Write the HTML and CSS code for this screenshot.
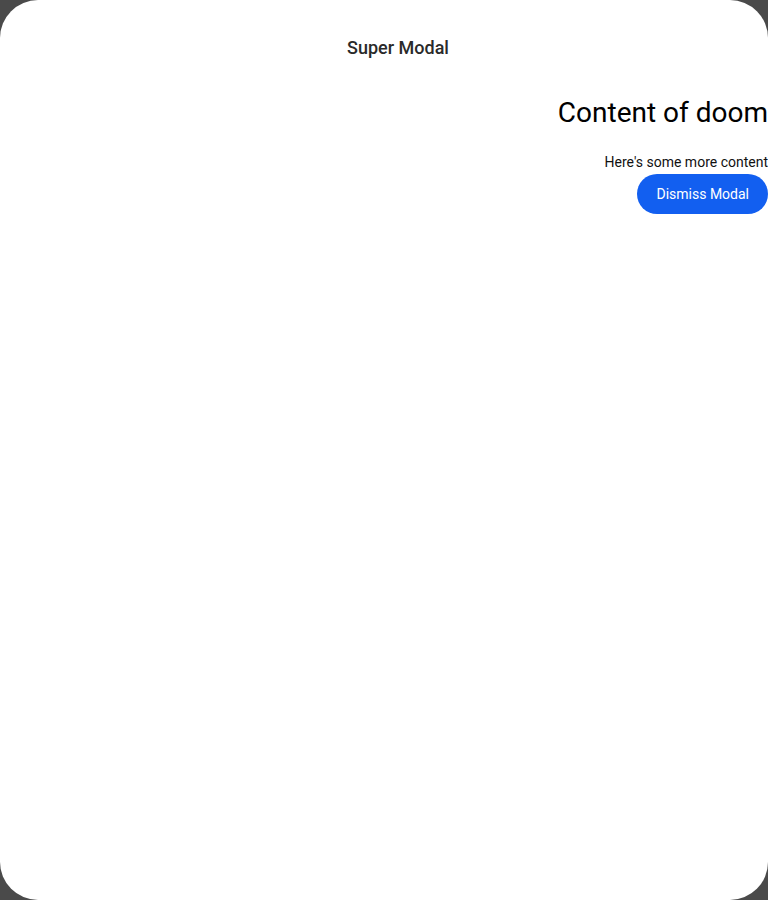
FILE: index.html
```html
<!DOCTYPE html>
<html lang="en">
<head>
<meta charset="utf-8">
<title>Super Modal</title>
<link rel="stylesheet" href="styles.css">
</head>
<body>
<div class="modal">
  <header class="toolbar">
    <div class="title">Super Modal</div>
  </header>
  <main class="content">
    <h1 class="heading">Content of doom</h1>
    <p class="text">Here's some more content</p>
    <button class="dismiss" type="button">Dismiss Modal</button>
  </main>
</div>
</body>
</html>
```

FILE: styles.css
```css
html, body {
  margin: 0;
  padding: 0;
  background: #4a4a4a;
}
body {
  font-family: Roboto, "Noto Sans", sans-serif;
  color: #000;
}
.modal {
  width: 768px;
  height: 900px;
  background: #fff;
  border-radius: 38px;
  overflow: hidden;
  display: flex;
  flex-direction: column;
}
.toolbar {
  padding-top: 20px;
  height: 56px;
  display: flex;
  align-items: center;
  justify-content: center;
}
.title {
  padding-left: 28px;
  font-size: 18px;
  font-weight: 500;
  color: #2a2a2a;
  line-height: 20px;
}
.content {
  display: flex;
  flex-direction: column;
  align-items: flex-end;
}
.heading {
  margin: 20px 0 0;
  font-size: 28px;
  font-weight: 400;
  line-height: 34px;
}
.text {
  margin: 24px 0 0;
  font-size: 14px;
  line-height: 16px;
  color: #111;
}
.dismiss {
  margin-top: 4px;
  height: 40px;
  padding: 0 19px;
  border: none;
  border-radius: 20px;
  background: #125ff0;
  color: #fff;
  font-family: Roboto, "Noto Sans", sans-serif;
  font-size: 14px;
  font-weight: 400;
}
```
